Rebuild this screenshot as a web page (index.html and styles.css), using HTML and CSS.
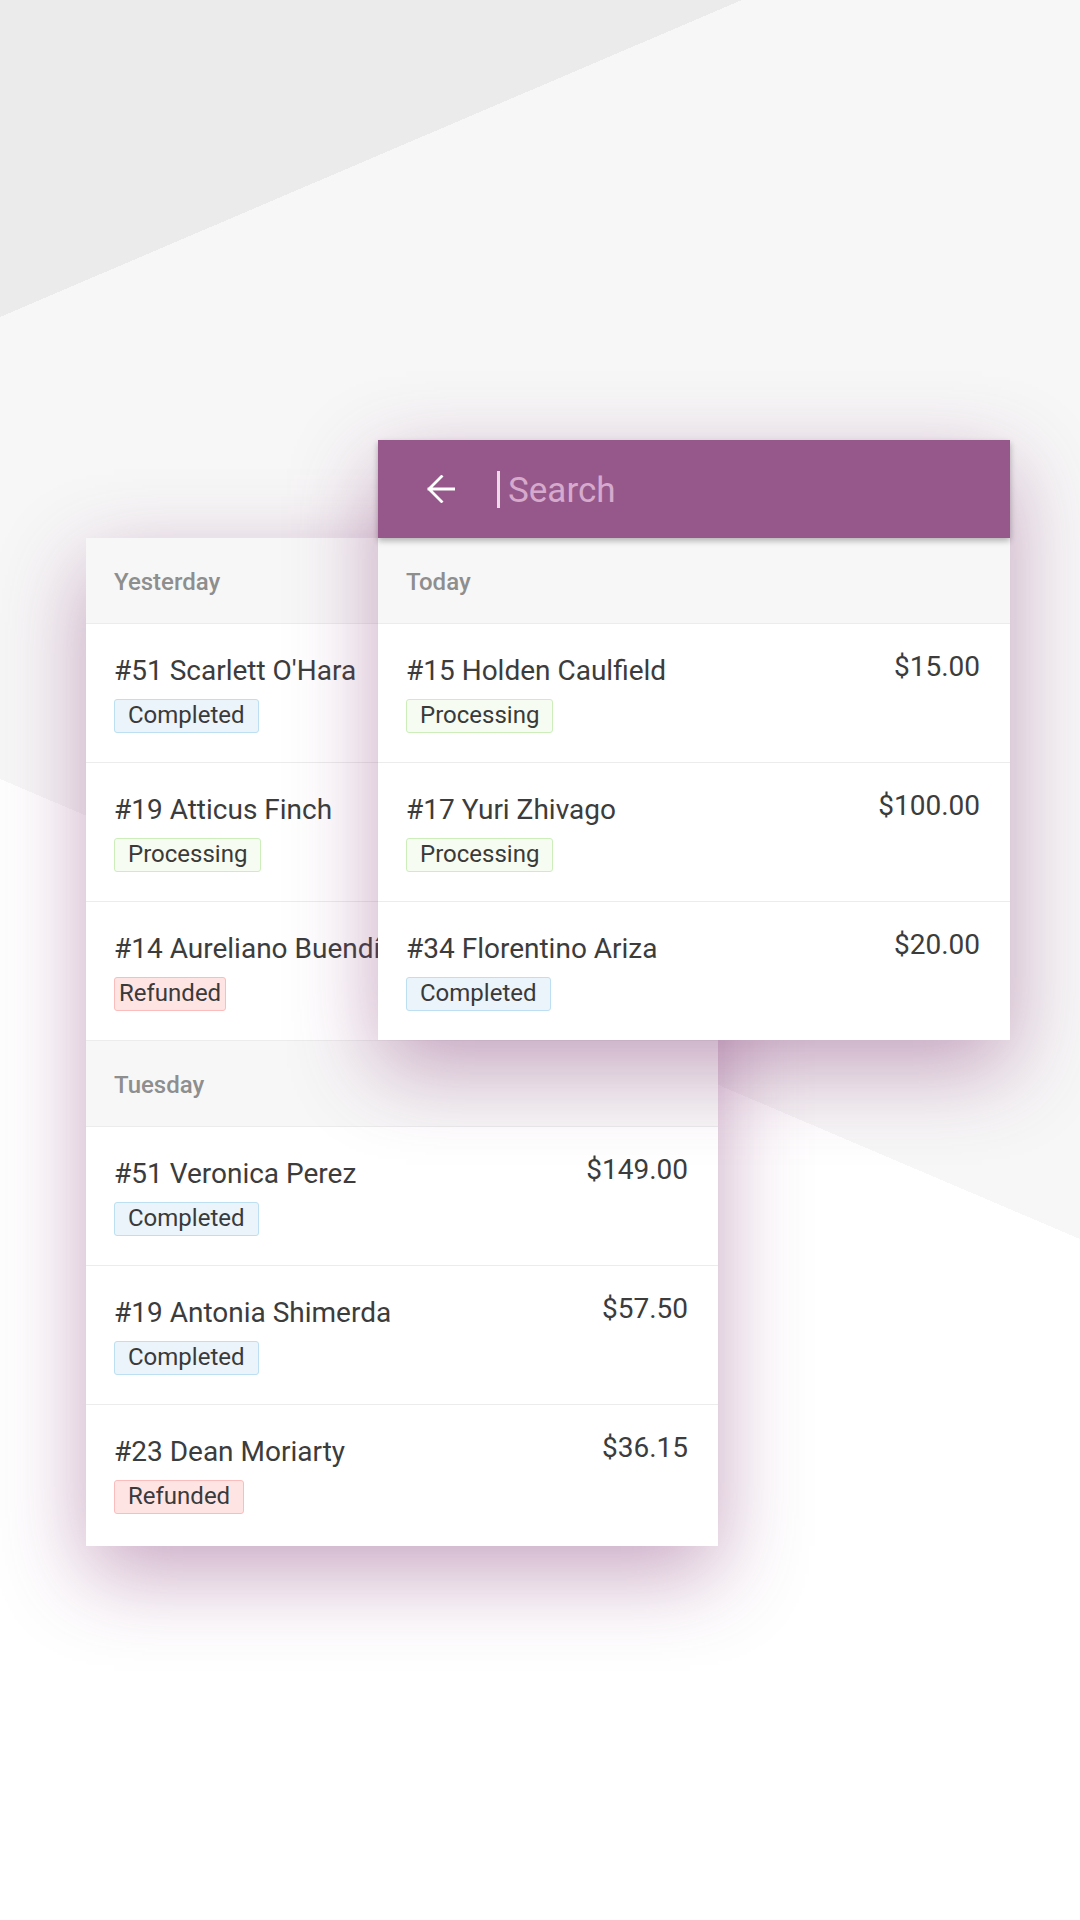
FILE: index.html
```html
<!DOCTYPE html>
<html lang="en">
<head>
<meta charset="utf-8">
<title>Orders search</title>
<link rel="stylesheet" href="styles.css">
</head>
<body>
<div class="stage">
  <section class="card card-back">
    <div class="group-head">Yesterday</div>
    <div class="order">
      <div class="order-main">
        <div class="order-name">#51 Scarlett O'Hara</div>
        <span class="badge badge-completed">Completed</span>
      </div>
    </div>
    <div class="order">
      <div class="order-main">
        <div class="order-name">#19 Atticus Finch</div>
        <span class="badge badge-processing">Processing</span>
      </div>
    </div>
    <div class="order">
      <div class="order-main">
        <div class="order-name">#14 Aureliano Buendía</div>
        <span class="badge badge-refunded badge-tight">Refunded</span>
      </div>
    </div>
    <div class="group-head">Tuesday</div>
    <div class="order">
      <div class="order-main">
        <div class="order-name">#51 Veronica Perez</div>
        <span class="badge badge-completed">Completed</span>
      </div>
      <div class="order-total">$149.00</div>
    </div>
    <div class="order">
      <div class="order-main">
        <div class="order-name">#19 Antonia Shimerda</div>
        <span class="badge badge-completed">Completed</span>
      </div>
      <div class="order-total">$57.50</div>
    </div>
    <div class="order">
      <div class="order-main">
        <div class="order-name">#23 Dean Moriarty</div>
        <span class="badge badge-refunded">Refunded</span>
      </div>
      <div class="order-total">$36.15</div>
    </div>
  </section>

  <section class="card card-front">
    <div class="search-bar">
      <svg class="back-icon" width="28" height="28" viewBox="0 0 28 28" aria-hidden="true">
        <path d="M2 14 H27 M14.5 1.5 L2 14 L14.5 26.5" fill="none" stroke="#ffffff" stroke-width="2.8" stroke-linecap="square" stroke-linejoin="miter"/>
      </svg>
      <span class="caret"></span>
      <span class="search-placeholder">Search</span>
    </div>
    <div class="group-head">Today</div>
    <div class="order">
      <div class="order-main">
        <div class="order-name">#15 Holden Caulfield</div>
        <span class="badge badge-processing">Processing</span>
      </div>
      <div class="order-total">$15.00</div>
    </div>
    <div class="order">
      <div class="order-main">
        <div class="order-name">#17 Yuri Zhivago</div>
        <span class="badge badge-processing">Processing</span>
      </div>
      <div class="order-total">$100.00</div>
    </div>
    <div class="order">
      <div class="order-main">
        <div class="order-name">#34 Florentino Ariza</div>
        <span class="badge badge-completed">Completed</span>
      </div>
      <div class="order-total">$20.00</div>
    </div>
  </section>
</div>
</body>
</html>
```

FILE: styles.css
```css
html, body {
  margin: 0;
  padding: 0;
}

body {
  width: 1080px;
  height: 1920px;
  overflow: hidden;
  font-family: Roboto, "Noto Sans", "Liberation Sans", sans-serif;
  color: #3c3c3c;
  background-color: #f7f7f7;
  background-image:
    linear-gradient(to bottom right, #ebebeb 50%, rgba(235, 235, 235, 0) 50%),
    linear-gradient(to top right, #ffffff 50%, rgba(255, 255, 255, 0) 50%),
    linear-gradient(#ffffff, #ffffff);
  background-repeat: no-repeat;
  background-position: 0 0, 0 779px, 0 1239px;
  background-size: 742px 317px, 1080px 460px, 1080px 681px;
}

.stage {
  display: grid;
  grid-template-columns: 86px 292px 340px 292px 1fr;
  align-items: start;
  padding-top: 440px;
}

.card {
  background: #ffffff;
  box-shadow: 0 28px 80px rgba(140, 70, 128, 0.48);
}

.card-back {
  grid-column: 2 / 4;
  grid-row: 1;
  margin-top: 98px;
  padding-bottom: 3px;
}

.card-front {
  grid-column: 3 / 5;
  grid-row: 1;
  z-index: 2;
}

.search-bar {
  position: relative;
  z-index: 1;
  height: 98px;
  display: flex;
  align-items: center;
  padding-left: 49px;
  background: #96588a;
  box-shadow: 0 3px 6px rgba(0, 0, 0, 0.28);
}

.back-icon {
  display: block;
  flex: none;
}

.caret {
  width: 3px;
  height: 37px;
  margin-left: 42px;
  background: #eedbea;
}

.search-placeholder {
  margin-left: 8px;
  padding-top: 4px;
  font-size: 35px;
  line-height: 40px;
  color: #d6aacd;
}

.group-head {
  padding: 30px 28px 27px;
  line-height: 28px;
  font-size: 24px;
  font-weight: 500;
  color: #8e8e8e;
  background: #f7f7f7;
  border-bottom: 1px solid #ececec;
}

.order {
  display: flex;
  justify-content: space-between;
  align-items: flex-start;
  padding: 30px 30px 29px 28px;
  border-bottom: 1px solid #ececec;
}

.order:last-child {
  border-bottom: 0;
}

.order-main {
  display: flex;
  flex-direction: column;
  align-items: flex-start;
  gap: 11px;
}

.order-name,
.order-total {
  font-size: 28px;
  line-height: 34px;
  color: #3c3c3c;
  white-space: nowrap;
}

.order-total {
  margin-top: -4px;
}

.badge {
  display: inline-block;
  box-sizing: border-box;
  height: 34px;
  padding: 0 13px;
  border: 1px solid;
  border-radius: 3px;
  font-size: 24px;
  line-height: 31px;
  color: #3a3a3a;
}

.badge-completed {
  background: #ebf4fa;
  border-color: #bcdff1;
}

.badge-processing {
  background: #f6fcf1;
  border-color: #cdeebb;
}

.badge-refunded {
  background: #ffe4e4;
  border-color: #fbbcbc;
}

.badge-tight {
  padding: 0 4px;
}
```
